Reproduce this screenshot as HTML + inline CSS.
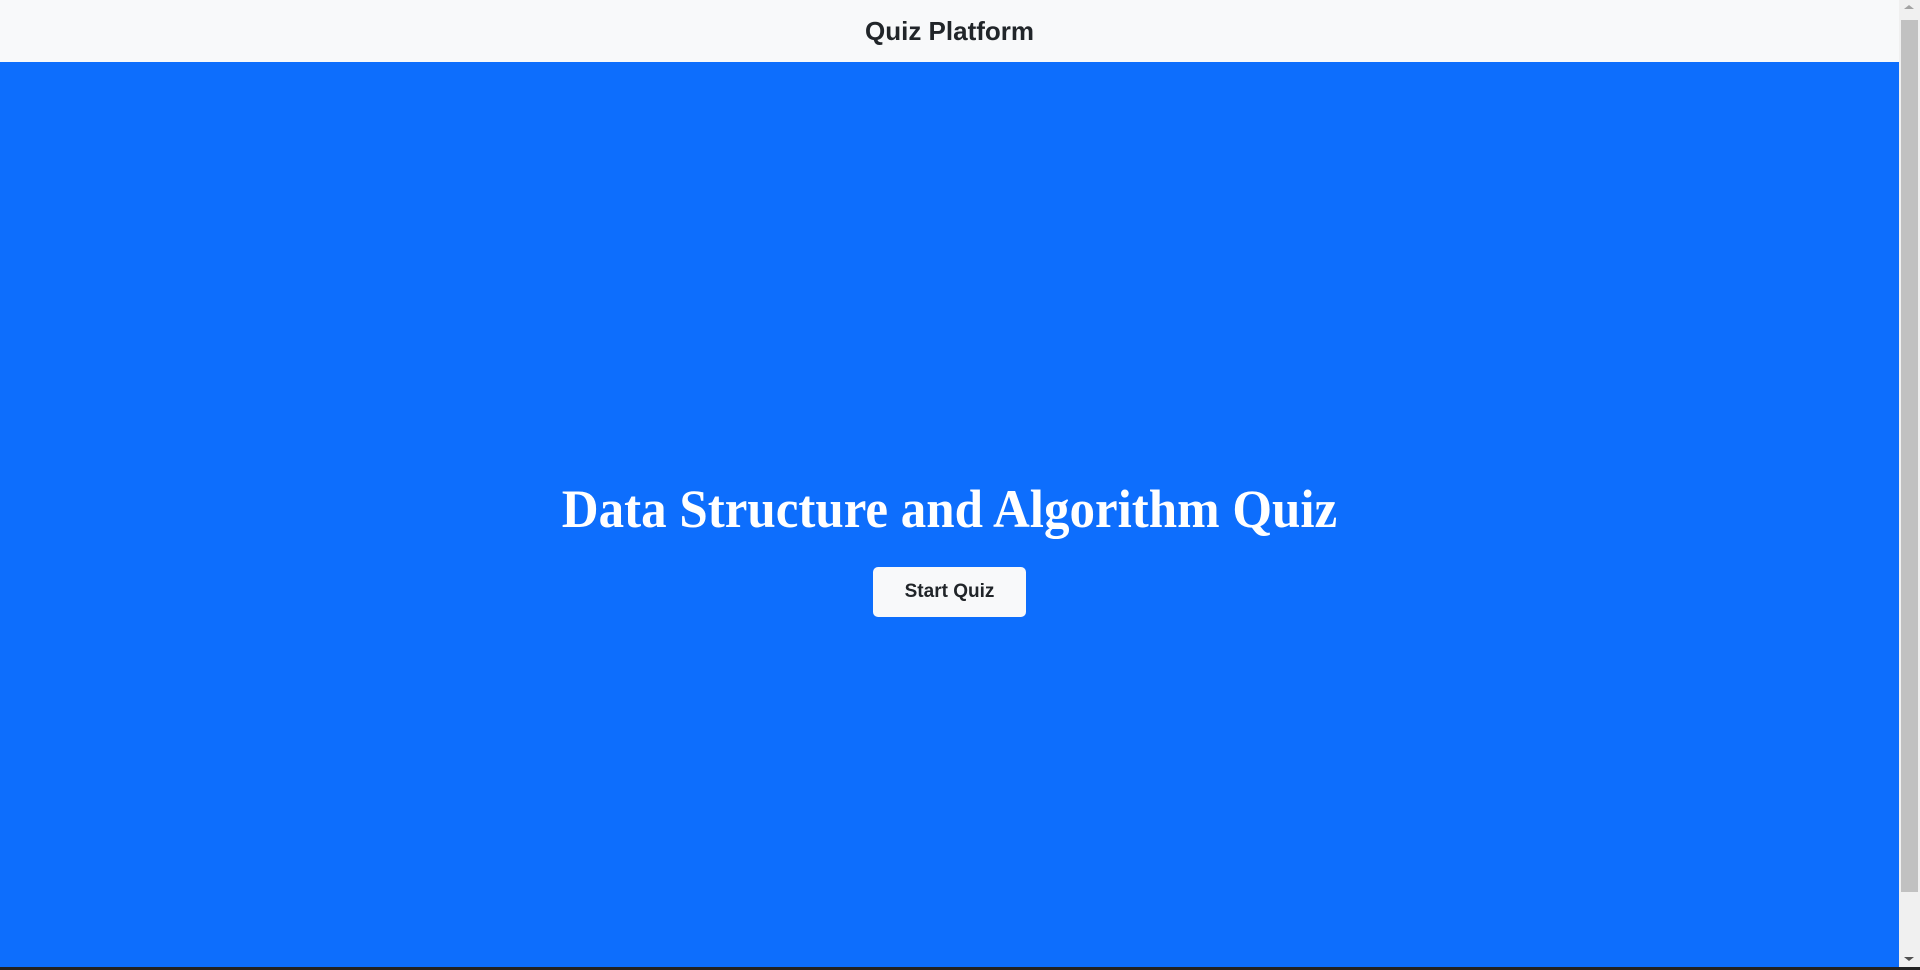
<!DOCTYPE html>
<html><head><meta charset="utf-8"><style>
html,body{margin:0;padding:0;width:1920px;height:970px;overflow:hidden;font-family:"Liberation Sans",sans-serif}
.hdr{position:absolute;left:0;top:0;width:1899px;height:62px;background:#f8f9fa;display:flex;align-items:center;justify-content:center;font-weight:bold;font-size:26px;color:#212529}
.main{position:absolute;left:0;top:62px;width:1899px;height:905px;background:#0d6efd}
h1{position:absolute;left:0;width:1899px;top:480px;margin:0;text-align:center;font-family:"Liberation Serif",serif;font-weight:bold;font-size:51px;color:#fff;line-height:60px;transform:scaleY(1.06)}
.btn{position:absolute;left:873px;top:567px;width:153px;height:50px;background:#f8f9fa;border-radius:5px;display:flex;align-items:center;justify-content:center;font-weight:bold;font-size:19px;color:#212529}
.sb{position:absolute;left:1899px;top:0;width:21px;height:967px;background:#f0f0f0}
.thumb{position:absolute;left:1901px;top:20px;width:17px;height:872px;background:#c1c1c1}
.bot{position:absolute;left:0;top:967px;width:1920px;height:3px;background:#222}
.up{position:absolute;left:1904px;top:5px;width:0;height:0;border-left:5px solid transparent;border-right:5px solid transparent;border-bottom:4px solid #a3a3a3}
.dn{position:absolute;left:1904px;top:957px;width:0;height:0;border-left:5px solid transparent;border-right:5px solid transparent;border-top:4px solid #505050}
</style></head><body>
<div class="hdr">Quiz Platform</div>
<div class="main"></div>
<h1>Data Structure and Algorithm Quiz</h1>
<div class="btn">Start Quiz</div>
<div class="sb"></div><div class="thumb"></div><div class="up"></div><div class="dn"></div>
<div class="bot"></div>
</body></html>
